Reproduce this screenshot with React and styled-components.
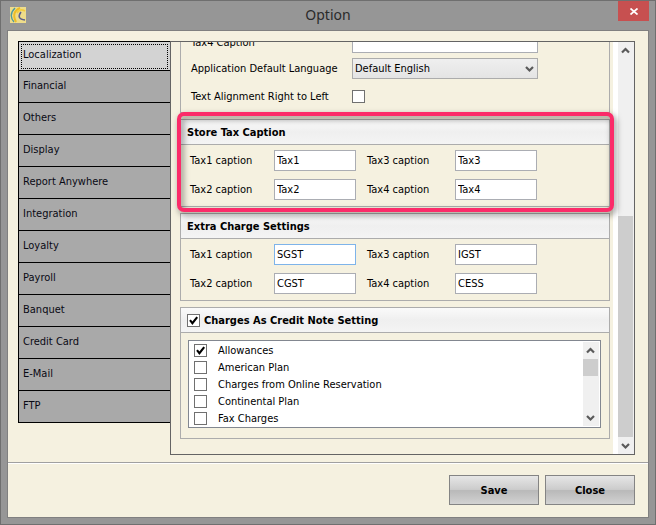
import React, { useState } from "react"
import styled, { createGlobalStyle } from "styled-components"

const GlobalStyle = createGlobalStyle`
  * {
    box-sizing: border-box;
  }
  body {
    margin: 0;
    color: #000;
    font-family: "DejaVu Sans Condensed", "DejaVu Sans", sans-serif;
    font-size: 11px;
    line-height: 15px;
  }
  button, input, select {
    margin: 0;
    color: inherit;
    font: inherit;
  }
`

const Window = styled.div`
  display: flex;
  flex-direction: column;
  height: 100vh;
  min-height: 470px;
  padding: 0 6px 6px;
  border: 1px solid #6f6f6f;
  background: #969696;
`

const TitleBar = styled.header`
  display: grid;
  grid-template-columns: 48px 1fr 48px;
  align-items: start;
  flex: none;
  height: 29px;
`

const Logo = styled.svg`
  display: block;
  width: 16px;
  height: 16px;
  margin: 6px 0 0 3px;
`

const Title = styled.h1`
  margin: 0;
  padding-top: 4px;
  font-family: "Noto Sans", sans-serif;
  font-size: 14px;
  font-weight: 400;
  line-height: 20px;
  text-align: center;
  color: #2a2a2a;
`

const CloseButton = styled.button`
  display: grid;
  place-items: center;
  justify-self: end;
  width: 31px;
  height: 20px;
  padding: 0;
  border: 0;
  background: #c75050;
`

const Client = styled.div`
  display: flex;
  flex-direction: column;
  flex: 1;
  min-height: 0;
  border: 1px solid #808080;
  background: #f5f1e0;
`

const Main = styled.main`
  display: flex;
  flex: 1;
  min-height: 0;
  padding: 10px 13px 7px 10px;
`

const Nav = styled.nav`
  display: flex;
  flex-direction: column;
  flex: none;
  align-self: flex-start;
  width: 152px;
  border: solid #000;
  border-width: 1px 0 0 1px;
`

const NavItem = styled.button`
  height: ${props => (props.$active ? 29 : 32)}px;
  padding: 0 2px 3px 4px;
  border: 0;
  border-bottom: 1px solid #000;
  outline: ${props => (props.$active ? "1px dotted #000" : "none")};
  outline-offset: -3px;
  background: ${props => (props.$active ? "#d3d3d3" : "#a9a9a9")};
  text-align: left;
  color: #0a0a14;
`

const Pane = styled.div`
  display: flex;
  flex: 1;
  min-width: 0;
  border: 1px solid #646464;
  overflow: hidden;
`

/* scrolled to its end, so the first rows run out above the pane */
const Content = styled.div`
  position: relative;
  z-index: 1;
  display: flex;
  flex-direction: column;
  justify-content: flex-end;
  gap: 6px;
  flex: 1;
  min-width: 0;
  padding: 0 3px 15px 9px;
`

const Group = styled.section`
  position: relative;
  flex: none;
  border: 1px solid #acacac;
`

const Highlight = styled.div`
  position: absolute;
  z-index: 2;
  inset: -8px -5px -6px -4px;
  border: 4px solid #fb2b69;
  border-radius: 7px;
  filter: drop-shadow(2px 3px 3px rgba(0, 0, 0, 0.5));
  pointer-events: none;
`

const GroupHeader = styled.h2`
  display: flex;
  align-items: center;
  gap: 4px;
  height: 25px;
  margin: 0;
  padding: 0 6px;
  border-bottom: 1px solid #acacac;
  background: linear-gradient(#fafafa, #efefef 50%, #f4f4f4);
  font-size: 11px;
  font-weight: 700;
`

const WideFields = styled.div`
  display: grid;
  grid-template-columns: 161px 186px;
  grid-template-rows: 21px 21px 25px;
  align-items: center;
  row-gap: 5px;
  padding: 3px 10px;
`

const CaptionFields = styled.div`
  display: grid;
  grid-template-columns: 84px 93px 88px 82px;
  grid-auto-rows: 21px;
  align-items: center;
  row-gap: 8px;
  padding: 5px 9px 6px;
`

const TextBox = styled.input`
  width: ${props => (props.$wide ? "186px" : "82px")};
  height: 21px;
  padding: 0 2px;
  border: 1px solid ${props => (props.$current ? "#7eb4ea" : "#abadb3")};
  border-radius: 0;
  outline: none;
  background: #fff;
`

const SelectBox = styled.div`
  display: grid;
  align-items: center;

  > * {
    grid-area: 1 / 1;
  }
  > svg {
    justify-self: end;
    margin-right: 4px;
    pointer-events: none;
  }
`

const Select = styled.select`
  appearance: none;
  width: 100%;
  height: 21px;
  padding: 0 20px 0 2px;
  border: 1px solid #acacac;
  border-radius: 0;
  outline: none;
  background: linear-gradient(#efefef, #e4e4e4);
`

const TickBox = styled.span`
  display: inline-grid;
  flex: none;
  width: 13px;
  height: 13px;

  > * {
    grid-area: 1 / 1;
  }
  > svg {
    pointer-events: none;
  }
`

const TickInput = styled.input`
  appearance: none;
  width: 13px;
  height: 13px;
  border: 1px solid #707070;
  background: #fff;
`

const ListFrame = styled.div`
  display: flex;
  margin: 7px 8px 10px 7px;
  padding-right: 1px;
  border: 1px solid #828790;
  background: #fff;
`

const List = styled.ul`
  flex: 1;
  margin: 0;
  padding: 1px 0 0 5px;
  list-style: none;
`

const ListRow = styled.li`
  display: flex;
  align-items: center;
  gap: 11px;
  height: 17px;
`

const ScrollTrack = styled.div`
  display: flex;
  flex-direction: column;
  flex: none;
  width: 16px;
  margin: ${props => (props.$inset ? "1px 0" : "0")};
  background: #f0f0f0;
`

const ScrollArrow = styled.button`
  display: grid;
  place-items: center;
  flex: none;
  width: 15px;
  height: 17px;
  padding: 0;
  border: 0;
  background: none;
`

const ScrollSpace = styled.div`
  flex: ${props => props.$share} 0 0;
`

const ScrollThumb = styled.div`
  flex: ${props => props.$share} 0 0;
  width: 15px;
  background: #cdcdcd;
`

const Gutter = styled.div`
  flex: none;
  width: 5px;
  background: #fff;
`

const Footer = styled.footer`
  display: flex;
  justify-content: flex-end;
  gap: 6px;
  flex: none;
  padding: 12px 13px;
  border-top: 1px solid #a0a0a0;
  box-shadow: inset 0 1px #fff;
`

const ActionButton = styled.button`
  width: 90px;
  height: 30px;
  padding: 0;
  border: 1px solid #848484;
  background: linear-gradient(#e6e6e6, #cccccc 48%, #b9b9b9 52%, #d2d2d2);
  font-size: 11px;
  font-weight: 700;
`

const sections = [
  "Localization",
  "Financial",
  "Others",
  "Display",
  "Report Anywhere",
  "Integration",
  "Loyalty",
  "Payroll",
  "Banquet",
  "Credit Card",
  "E-Mail",
  "FTP",
]

const charges = [
  "Allowances",
  "American Plan",
  "Charges from Online Reservation",
  "Continental Plan",
  "Fax Charges",
]

function Chevron({ up }) {
  return (
    <svg width="9" height="8" viewBox="0 0 9 8" aria-hidden="true">
      <path
        d={up ? "M1 5.5 4.5 2 8 5.5" : "M1 2 4.5 5.5 8 2"}
        fill="none"
        stroke="#5a5a5a"
        strokeWidth="2.2"
      />
    </svg>
  )
}

function Tick({ id, defaultChecked }) {
  const [checked, setChecked] = useState(!!defaultChecked)
  return (
    <TickBox>
      <TickInput
        id={id}
        type="checkbox"
        checked={checked}
        onChange={e => setChecked(e.target.checked)}
      />
      {checked && (
        <svg width="13" height="13" viewBox="0 0 13 13" aria-hidden="true">
          <path d="M3 6.2 5.4 9.2 10.2 3.2" fill="none" stroke="#000" strokeWidth="2.1" />
        </svg>
      )}
    </TickBox>
  )
}

function Scrollbar({ inset, before, thumb, after }) {
  return (
    <ScrollTrack $inset={inset}>
      <ScrollArrow type="button" aria-label="Scroll up">
        <Chevron up />
      </ScrollArrow>
      <ScrollSpace $share={before} />
      <ScrollThumb $share={thumb} />
      <ScrollSpace $share={after} />
      <ScrollArrow type="button" aria-label="Scroll down">
        <Chevron />
      </ScrollArrow>
    </ScrollTrack>
  )
}

function Captions({ name, values, current }) {
  // laid out row by row: 1 and 3, then 2 and 4
  return (
    <CaptionFields>
      {[1, 3, 2, 4].map(n => (
        <React.Fragment key={n}>
          <label htmlFor={`${name}${n}`}>{`Tax${n} caption`}</label>
          <TextBox
            id={`${name}${n}`}
            defaultValue={values[n - 1]}
            $current={current === n}
          />
        </React.Fragment>
      ))}
    </CaptionFields>
  )
}

export default function App() {
  const [active, setActive] = useState("Localization")

  return (
    <Window>
      <GlobalStyle />
      <TitleBar>
        <Logo viewBox="0 0 16 16" aria-hidden="true">
          <rect width="16" height="16" fill="#eedc8a" />
          <path d="M5 1Q-2 8 4 15" fill="none" stroke="#4d9a9c" strokeWidth="1.3" />
          <path d="M10 1Q1 5 6 15" fill="none" stroke="#edbd25" strokeWidth="2" />
          <path d="M15 4Q10 1 7 6" fill="none" stroke="#f4cc3c" strokeWidth="1.5" />
          <path d="M11 5Q6 12 15 13" fill="none" stroke="#5a5f8e" strokeWidth="1.6" />
        </Logo>
        <Title>Option</Title>
        <CloseButton type="button" aria-label="Close window">
          <svg width="8" height="7" viewBox="0 0 8 7" aria-hidden="true">
            <path d="M.5.5 7.5 6.5M7.5.5.5 6.5" stroke="#fff" strokeWidth="1.7" />
          </svg>
        </CloseButton>
      </TitleBar>
      <Client>
        <Main>
          <Nav>
            {sections.map(name => (
              <NavItem
                key={name}
                type="button"
                $active={name === active}
                onClick={() => setActive(name)}
              >
                {name}
              </NavItem>
            ))}
          </Nav>
          <Pane>
            <Content>
              <Group>
                <WideFields>
                  <label htmlFor="tax4">Tax4 Caption</label>
                  <TextBox id="tax4" $wide />
                  <label htmlFor="language">Application Default Language</label>
                  <SelectBox>
                    <Select id="language">
                      <option>Default English</option>
                    </Select>
                    <Chevron />
                  </SelectBox>
                  <label htmlFor="rtl">Text Alignment Right to Left</label>
                  <Tick id="rtl" />
                </WideFields>
              </Group>
              <Group>
                <GroupHeader>Store Tax Caption</GroupHeader>
                <Captions name="store" values={["Tax1", "Tax2", "Tax3", "Tax4"]} />
                <Highlight />
              </Group>
              <Group>
                <GroupHeader>Extra Charge Settings</GroupHeader>
                <Captions
                  name="extra"
                  values={["SGST", "CGST", "IGST", "CESS"]}
                  current={1}
                />
              </Group>
              <Group>
                <GroupHeader>
                  <Tick id="creditNote" defaultChecked />
                  <label htmlFor="creditNote">Charges As Credit Note Setting</label>
                </GroupHeader>
                <ListFrame>
                  <List>
                    {charges.map((charge, i) => (
                      <ListRow key={charge}>
                        <Tick id={`charge${i}`} defaultChecked={i === 0} />
                        <label htmlFor={`charge${i}`}>{charge}</label>
                      </ListRow>
                    ))}
                  </List>
                  <Scrollbar inset before={0} thumb={17} after={33} />
                </ListFrame>
              </Group>
            </Content>
            <Gutter />
            <Scrollbar before={157} thumb={221} after={0} />
          </Pane>
        </Main>
        <Footer>
          <ActionButton type="button">Save</ActionButton>
          <ActionButton type="button">Close</ActionButton>
        </Footer>
      </Client>
    </Window>
  )
}
